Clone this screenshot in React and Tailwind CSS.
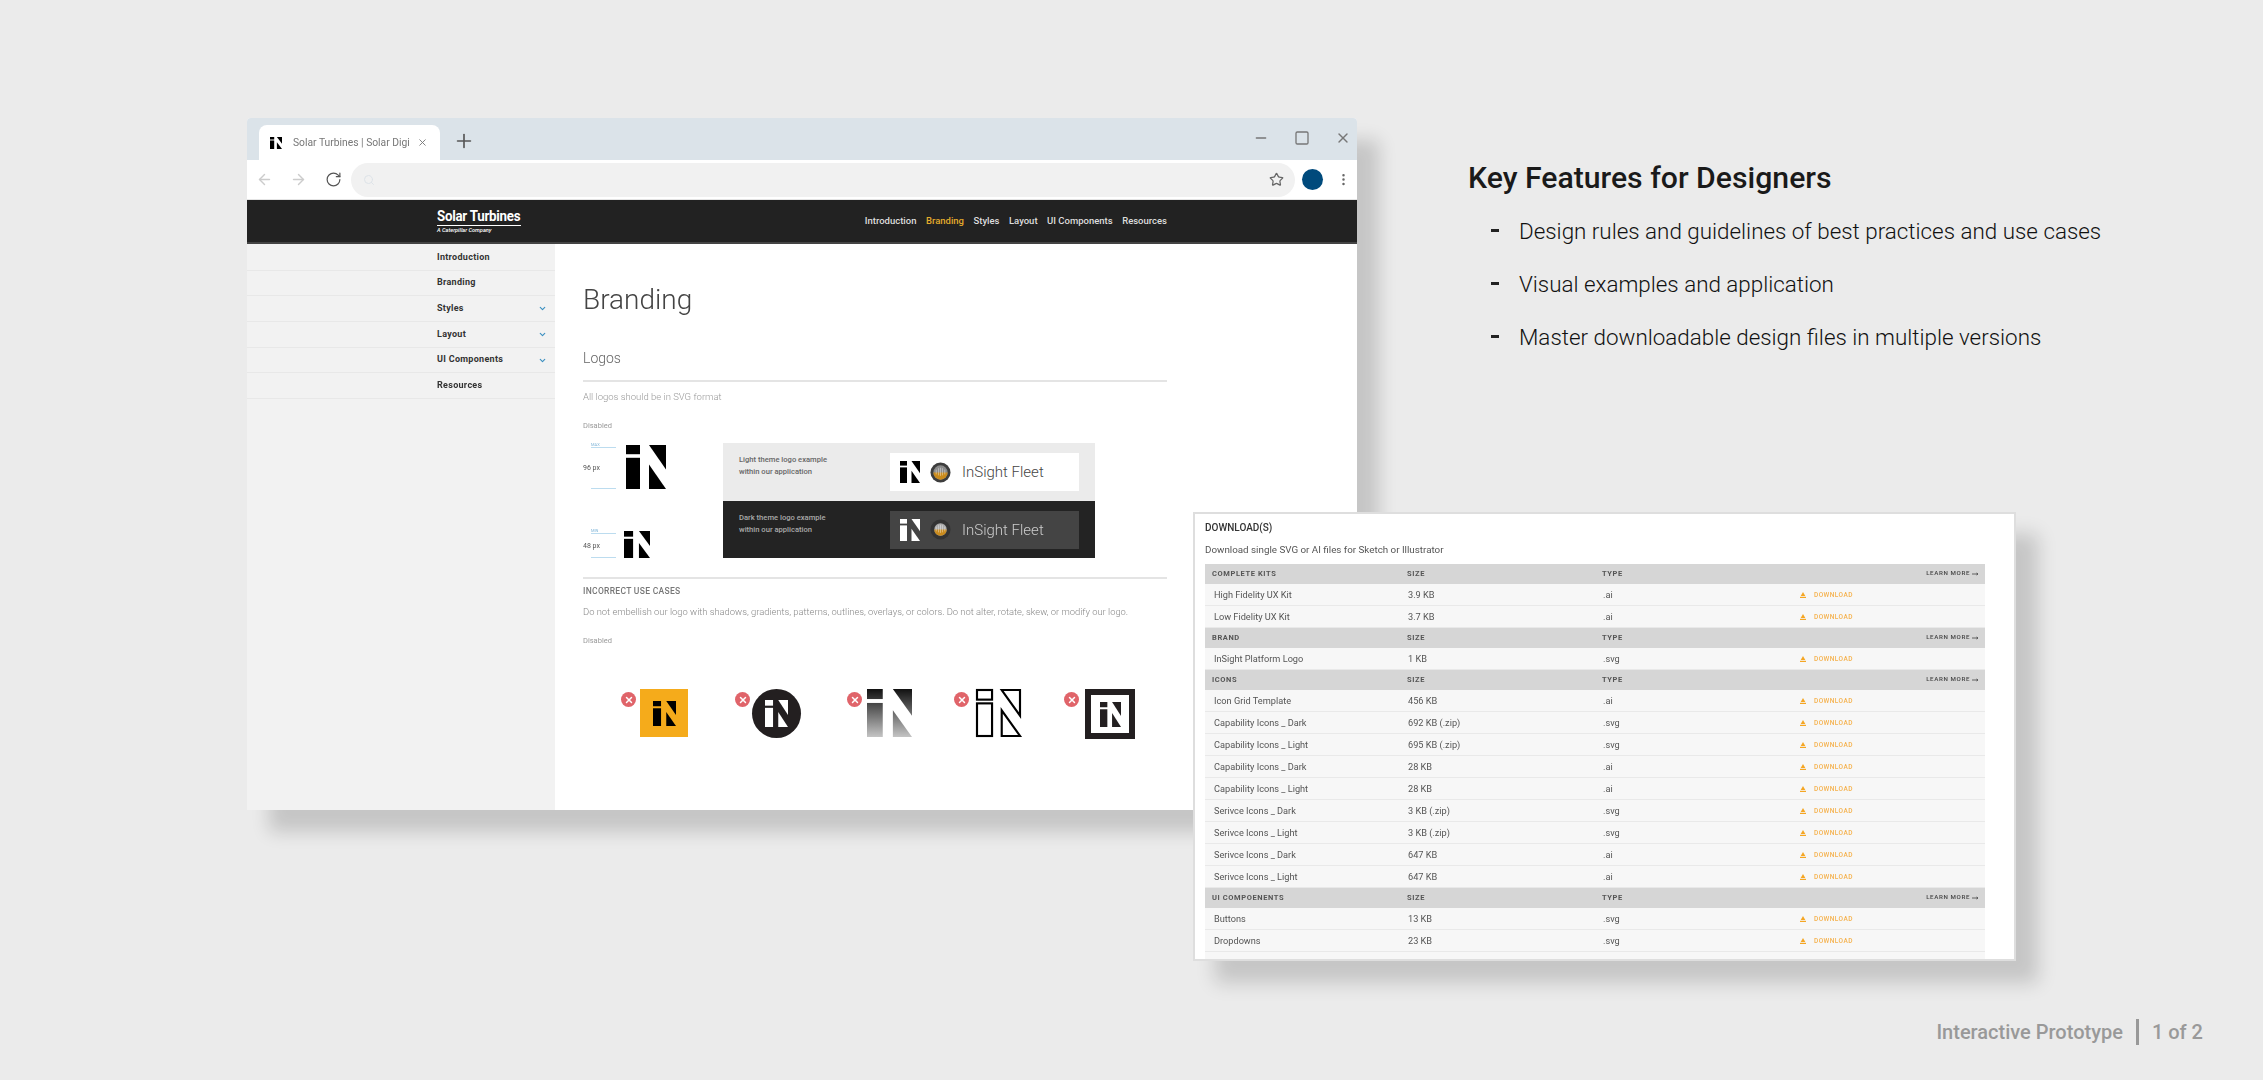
import { ArrowLeft, ArrowRight, ChevronDown, EllipsisVertical, Minus, Plus, RotateCw, Search, Square, Star, X } from "lucide-react";

const sideItems = [
  { label: "Introduction" },
  { label: "Branding" },
  { label: "Styles", more: true },
  { label: "Layout", more: true },
  { label: "UI Components", more: true },
  { label: "Resources" },
];

const navItems = ["Introduction", "Branding", "Styles", "Layout", "UI Components", "Resources"];

const features = [
  "Design rules and guidelines of best practices and use cases",
  "Visual examples and application",
  "Master downloadable design files in multiple versions",
];

const downloads = [
  { title: "COMPLETE KITS", rows: [["High Fidelity UX Kit", "3.9 KB", ".ai"], ["Low Fidelity UX Kit", "3.7 KB", ".ai"]] },
  { title: "BRAND", rows: [["InSight Platform Logo", "1 KB", ".svg"]] },
  {
    title: "ICONS",
    rows: [
      ["Icon Grid Template", "456 KB", ".ai"],
      ["Capability Icons _ Dark", "692 KB (.zip)", ".svg"],
      ["Capability Icons _ Light", "695 KB (.zip)", ".svg"],
      ["Capability Icons _ Dark", "28 KB", ".ai"],
      ["Capability Icons _ Light", "28 KB", ".ai"],
      ["Serivce Icons _ Dark", "3 KB (.zip)", ".svg"],
      ["Serivce Icons _ Light", "3 KB (.zip)", ".svg"],
      ["Serivce Icons _ Dark", "647 KB", ".ai"],
      ["Serivce Icons _ Light", "647 KB", ".ai"],
    ],
  },
  { title: "UI COMPOENENTS", rows: [["Buttons", "13 KB", ".svg"], ["Dropdowns", "23 KB", ".svg"], ["Input Fields", "19 KB", ".svg"]] },
];

// the iN mark, viewBox matches the 40x43 source shape
function Logo({ className, fill = "#000", stroke, strokeWidth }) {
  const paint = { fill, stroke, strokeWidth };
  return (
    <svg viewBox="0 0 40 43" className={className} preserveAspectRatio="none">
      <defs>
        <linearGradient id="fade" gradientUnits="userSpaceOnUse" x1="0" y1="0" x2="0" y2="43">
          <stop offset="0" stopColor="#111" />
          <stop offset="1" stopColor="#c4c4c4" />
        </linearGradient>
      </defs>
      <rect x="0" y="0" width="14" height="9" {...paint} />
      <rect x="0" y="12.5" width="14" height="30.5" {...paint} />
      <path d="M23 0H40V24Z" {...paint} />
      <path d="M23 19L40 43H23Z" {...paint} />
    </svg>
  );
}

function Gauge({ dark }) {
  return (
    <svg viewBox="0 0 22 22" className="w-[21px] h-[21px] shrink-0">
      <circle cx="11" cy="11" r="10.5" fill={dark ? "#333" : "#3d3d3d"} />
      <circle cx="11" cy="11" r={dark ? 6.5 : 7.5} fill={dark ? "#aaa" : "#8a8a8a"} />
      <path d={dark ? "M4.5 11H17.5A6.5 6.5 0 0 1 4.5 11Z" : "M3.5 11H18.5A7.5 7.5 0 0 1 3.5 11Z"} fill="#c98a1c" />
      <path d="M6.5 8V13M9 6.5V14M11 6V14.5M13 6.5V14M15.5 8V13" stroke="#fff" strokeWidth="0.7" opacity="0.6" />
    </svg>
  );
}

function SizeSample({ label, tag, boxClass, logoClass }) {
  return (
    <div className="flex items-end">
      <div className={`relative flex flex-col justify-between ${boxClass}`}>
        <div className="ml-[8px] w-[25px] border-b border-[#bcdcef]">
          <div className="text-[4px] leading-[4px] text-[#7fb4d8]">{tag}</div>
        </div>
        <div className="text-[7px] leading-[8px] text-[#555]">{label}</div>
        <div className="ml-[8px] w-[25px] border-b border-[#bcdcef]" />
      </div>
      <Logo className={logoClass} />
    </div>
  );
}

function ThemePanel({ dark }) {
  return (
    <div className={`flex h-[57.5px] pl-[16px] pt-[10px] ${dark ? "bg-[#232323]" : "bg-[#ebebeb]"}`}>
      <div className={`w-[151px] pt-[1px] text-[7.6px] leading-[12px] font-medium ${dark ? "text-[#aaa]" : "text-[#666]"}`}>
        {dark ? "Dark" : "Light"} theme logo example
        <br />
        within our application
      </div>
      <div className={`w-[189px] h-[38px] flex items-center pl-[10px] ${dark ? "bg-[#444]" : "bg-white"}`}>
        <Logo className="w-[20px] h-[22px]" fill={dark ? "#fff" : "#000"} />
        <div className="ml-[10px]">
          <Gauge dark={dark} />
        </div>
        <div className={`ml-[11px] text-[15px] leading-[20px] font-light ${dark ? "text-[#ccc]" : "text-[#444]"}`}>InSight Fleet</div>
      </div>
    </div>
  );
}

function Badge({ className }) {
  return (
    <div className={`absolute w-[15px] h-[15px] rounded-full bg-[#e0646a] flex items-center justify-center ${className}`}>
      <X size={10} strokeWidth={3.5} color="#fff" />
    </div>
  );
}

function BrowserWindow() {
  return (
    <div className="w-[1110px] h-[692px] shrink-0 flex flex-col bg-white rounded-t-[4px] shadow-[22px_22px_18px_rgba(0,0,0,0.16)]">
      <div className="blur-[0.4px] flex flex-col h-full overflow-hidden rounded-t-[4px]">
        {/* tab strip */}
        <div className="h-[42px] shrink-0 bg-[#dbe3e9] flex items-end pl-[12px]">
          <div className="w-[181px] h-[35px] bg-white rounded-t-[8px] flex items-center pl-[11px]">
            <Logo className="w-[12px] h-[12px]" />
            <span className="ml-[11px] w-[120px] text-[10.3px] leading-[14px] text-[#777] whitespace-nowrap">Solar Turbines | Solar Digi</span>
            <X size={11} color="#777" className="ml-[4px]" />
          </div>
          <Plus size={22} strokeWidth={1.8} color="#555" className="ml-[13px] mb-[8px]" />
          <div className="ml-auto h-full flex items-center gap-[25px] pr-[6px] pb-[2px]">
            <Minus size={16} color="#777" />
            <Square size={16} color="#777" />
            <X size={16} color="#777" />
          </div>
        </div>
        {/* toolbar */}
        <div className="h-[40px] shrink-0 flex items-center bg-white border-b border-[#e4e4e4] pl-[9px]">
          <ArrowLeft size={17} color="#ccc" />
          <ArrowRight size={17} color="#ccc" className="ml-[17px]" />
          <RotateCw size={17} strokeWidth={1.7} color="#555" className="ml-[18px]" />
          <div className="ml-[9px] w-[944px] h-[34px] rounded-full bg-[#f1f1f1] flex items-center pl-[12px] pr-[11px] justify-between">
            <Search size={12} color="#dde3e8" />
            <Star size={15} color="#666" />
          </div>
          <div className="ml-[7px] w-[21px] h-[21px] rounded-full bg-[#004a7c]" />
          <EllipsisVertical size={15} color="#666" className="ml-[13px]" />
        </div>
        {/* site header */}
        <div className="h-[44px] shrink-0 bg-[#222] border-b-2 border-[#444] flex items-center pl-[190px] pr-[190px]">
          <div className="w-[84px] text-white">
            <div className="origin-left scale-x-[0.86] text-[15.5px] leading-[15px] font-bold tracking-[-0.3px] whitespace-nowrap">Solar Turbines</div>
            <div className="border-t border-white mt-[1px] text-[5.6px] leading-[8px] italic font-medium whitespace-nowrap">A Caterpillar Company</div>
          </div>
          <div className="ml-auto flex gap-[9.5px] text-[9.5px] font-medium">
            {navItems.map((n) => (
              <span key={n} className={n === "Branding" ? "text-[#e2ab2c]" : "text-[#ddd]"}>{n}</span>
            ))}
          </div>
        </div>
        <div className="flex flex-1 min-h-0">
          {/* sidebar */}
          <div className="w-[308px] shrink-0 bg-[#f2f2f2] pt-[1px]">
            {sideItems.map((s) => (
              <div key={s.label} className="h-[25.7px] border-b border-[#e8e8e8] flex items-center pl-[190px] pr-[8px] justify-between text-[9px] font-bold tracking-[0.3px] text-[#333]">
                {s.label}
                {s.more && <ChevronDown size={9} strokeWidth={3} color="#3b8fc0" />}
              </div>
            ))}
          </div>
          {/* main content */}
          <div className="flex-1 pl-[28px] pr-[190px]">
            <h1 className="mt-[40px] text-[28px] leading-[32px] font-light text-[#444]">Branding</h1>
            <h2 className="mt-[33px] text-[14px] leading-[18px] font-light text-[#666]">Logos</h2>
            <div className="mt-[13px] h-[2px] bg-[#e4e4e4]" />
            <p className="mt-[9px] text-[9.5px] leading-[12px] font-light text-[#999]">All logos should be in SVG format</p>
            <p className="mt-[18px] text-[7.5px] leading-[10px] text-[#999]">Disabled</p>
            <div className="mt-[12px] flex">
              <div className="w-[140px] shrink-0 flex flex-col gap-[40px]">
                <SizeSample label="96 px" tag="MAX" boxClass="w-[43px] h-[46px]" logoClass="w-[40px] h-[44px]" />
                <SizeSample label="48 px" tag="MIN" boxClass="w-[41px] h-[29px]" logoClass="w-[26px] h-[27px]" />
              </div>
              <div className="w-[372px] flex flex-col">
                <ThemePanel />
                <ThemePanel dark />
              </div>
            </div>
            <div className="mt-[19px] h-[2px] bg-[#e4e4e4]" />
            <p className="mt-[6px] text-[8.5px] leading-[12px] font-medium tracking-[0.3px] text-[#777]">INCORRECT USE CASES</p>
            <p className="mt-[9px] text-[9.4px] leading-[12px] font-light text-[#888] whitespace-nowrap">Do not embellish our logo with shadows, gradients, patterns, outlines, overlays, or colors. Do not alter, rotate, skew, or modify our logo.</p>
            <p className="mt-[18px] text-[7.5px] leading-[10px] text-[#999]">Disabled</p>
            <div className="mt-[43px] pl-[57px] flex items-start">
              <div className="relative w-[48px] h-[48px] bg-[#f5ab1b] flex items-center justify-center">
                <Badge className="top-[3px] -left-[19px]" />
                <Logo className="w-[23px] h-[25px]" />
              </div>
              <div className="relative ml-[64px] w-[49px] h-[49px] rounded-full bg-[#231f20] flex items-center justify-center">
                <Badge className="top-[3px] -left-[17px]" />
                <Logo className="w-[23px] h-[27px]" fill="#fff" />
              </div>
              <div className="relative ml-[66px] w-[45px] h-[48px]">
                <Badge className="top-[3px] -left-[20px]" />
                <Logo className="w-full h-full" fill="url(#fade)" />
              </div>
              <div className="relative ml-[64px] w-[45px] h-[48px] p-[1px]">
                <Badge className="top-[3px] -left-[22px]" />
                <Logo className="w-full h-full overflow-visible" fill="none" stroke="#000" strokeWidth="2" />
              </div>
              <div className="relative ml-[64px] w-[50px] h-[50px] border-[6px] border-[#231f20] flex items-center justify-center">
                <Badge className="-top-[3px] -left-[27px]" />
                <Logo className="w-[21px] h-[25px]" fill="#231f20" />
              </div>
            </div>
          </div>
        </div>
      </div>
    </div>
  );
}

function DownloadsPanel() {
  return (
    <div className="absolute left-[1193px] top-[512px] w-[823px] h-[449px] bg-white border-2 border-[#dedede] shadow-[22px_22px_18px_rgba(0,0,0,0.16)]">
      <div className="blur-[0.3px] h-full overflow-hidden pl-[10px] pt-[7px]">
        <div className="text-[10px] leading-[14px] font-medium text-[#333]">DOWNLOAD(S)</div>
        <div className="mt-[8px] text-[9.8px] leading-[14px] text-[#555]">Download single SVG or AI files for Sketch or Illustrator</div>
        <div className="mt-[7px] w-[780px]">
          {downloads.map((group) => (
            <div key={group.title}>
              <div className="h-[20px] bg-[#d6d6d6] grid grid-cols-[195px_195px_1fr_auto] items-center pl-[7px] pr-[7px] text-[7.5px] font-bold tracking-[0.6px] text-[#555]">
                <span>{group.title}</span>
                <span>SIZE</span>
                <span>TYPE</span>
                <span className="flex items-center gap-[2px] font-medium text-[6.2px] text-[#444]">
                  LEARN MORE
                  <svg viewBox="0 0 6 4" className="w-[6px] h-[4px]"><path d="M0 2H6M4.5 1L6 2L4.5 3" stroke="#444" strokeWidth="0.8" fill="none" /></svg>
                </span>
              </div>
              {group.rows.map((r, i) => (
                <div key={i} className="h-[22px] bg-[#f7f7f7] border-b border-[#e9e9e9] grid grid-cols-[194px_195px_197px_1fr] items-center pl-[9px] text-[9.2px] text-[#555]">
                  <span>{r[0]}</span>
                  <span>{r[1]}</span>
                  <span>{r[2]}</span>
                  <span className="flex items-center gap-[8px] pt-[2px] text-[6.5px] font-medium tracking-[0.45px] text-[#f5b14c]">
                    <svg viewBox="0 0 6 6" className="w-[6px] h-[6px] -mt-[2px]"><path d="M3 0L5.3 4H0.7Z" fill="#f5a623" /><rect x="0" y="4.8" width="6" height="1.2" fill="#f5a623" /></svg>
                    DOWNLOAD
                  </span>
                </div>
              ))}
            </div>
          ))}
        </div>
      </div>
    </div>
  );
}

export default function App() {
  return (
    <div className="relative w-[2263px] h-[1080px] overflow-hidden bg-[#ebebeb] font-['Roboto',sans-serif] flex flex-col">
      <div className="flex pl-[247px] pt-[118px]">
        <BrowserWindow />
        <div className="ml-[111px] pt-[41px]">
          <h2 className="text-[30.2px] leading-[38px] font-medium text-[#1a1a1a]">Key Features for Designers</h2>
          <ul className="mt-[20px] pl-[23px] flex flex-col gap-[23px]">
            {features.map((f) => (
              <li key={f} className="flex items-center h-[30px] text-[22.4px] font-light text-[#111]">
                <span className="w-[8px] h-[3px] bg-[#222] mr-[20px] -mt-[4px]" />
                {f}
              </li>
            ))}
          </ul>
        </div>
      </div>
      <DownloadsPanel />
      <div className="mt-auto mb-[35px] mr-[60px] self-end flex items-center text-[20px] leading-[26px] font-medium text-[#999]">
        Interactive Prototype
        <span className="mx-[13px] w-[3px] h-[26px] bg-[#999]" />
        1 of 2
      </div>
    </div>
  );
}
